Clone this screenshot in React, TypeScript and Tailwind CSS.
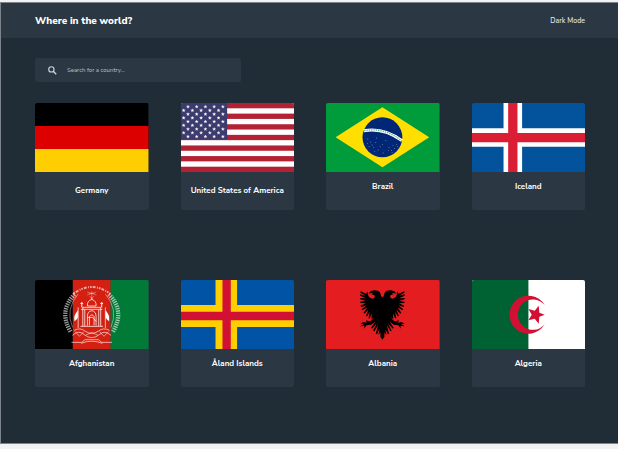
import type { ReactNode } from 'react';

type Country = { name: string; flag: ReactNode; low?: boolean };

function Flag({ children }: { children: ReactNode }) {
  return (
    <svg viewBox="0 0 342 207" preserveAspectRatio="none" aria-hidden="true" className="block h-[69px] w-full">
      {children}
    </svg>
  );
}

const germany = (
  <Flag>
    <rect width="342" height="207" fill="#000" />
    <rect y="69" width="342" height="69" fill="#dd0000" />
    <rect y="138" width="342" height="69" fill="#ffce00" />
  </Flag>
);

const stripes = [0, 2, 4, 6, 8, 10, 12];
const starRows = [0, 1, 2, 3, 4, 5, 6, 7, 8];
const starColumns = [0, 1, 2, 3, 4];

const usa = (
  <Flag>
    <rect width="342" height="207" fill="#fff" />
    {stripes.map((n) => (
      <rect key={n} y={(n * 207) / 13} width="342" height={207 / 13} fill="#b22234" />
    ))}
    <rect width="139" height="110" fill="#3c3b6e" />
    {starRows.map((row) =>
      starColumns.map((col) => (
        <path
          key={`${row}-${col}`}
          transform={`translate(${(row % 2 ? 8 : 21) + col * 26.3} ${11 + row * 11.2})`}
          d="M0-5 1.3-1.6 4.9-1.6 2.1.9 3.1 4.3 0 2.3-3.1 4.3-2.1.9-4.9-1.6-1.3-1.6Z"
          fill="#fff"
          stroke="#fff"
          strokeWidth="0.6"
        />
      )),
    )}
  </Flag>
);

const skyStars = [
  [126, 108], [134, 117], [130, 130], [139, 126], [144, 134], [150, 119], [152, 105], [157, 141],
  [163, 131], [170, 125], [172, 150], [180, 113], [188, 142], [190, 134], [197, 143], [202, 128],
  [206, 137], [212, 125], [216, 131], [199, 149], [147, 145], [125, 121],
];

const brazil = (
  <Flag>
    <rect width="342" height="207" fill="#009c3b" />
    <path d="M29 103 170 13 311 103 170 193Z" fill="#ffdf00" />
    <circle cx="170" cy="103" r="60" fill="#002776" />
    <path d="M114 83Q174 72 229 113" fill="none" stroke="#fff" strokeWidth="9" />
    <path d="M115 83Q174 72 228 113" fill="none" stroke="#5eb583" strokeWidth="4" strokeDasharray="4 3" />
    {skyStars.map(([x, y]) => (
      <circle key={`${x}-${y}`} cx={x} cy={y} r="1.3" fill="#c3cce6" />
    ))}
  </Flag>
);

const iceland = (
  <Flag>
    <rect width="342" height="207" fill="#02529c" />
    <path d="M95 0h56v207H95zM0 76h342v55H0z" fill="#fff" />
    <path d="M109 0h28v207h-28zM0 90h342v28H0z" fill="#dc1e35" />
  </Flag>
);

const afghanistan = (
  <Flag>
    <rect width="114" height="207" fill="#000" />
    <rect x="114" width="114" height="207" fill="#d32011" />
    <rect x="228" width="114" height="207" fill="#007a36" />
    <g fill="none" stroke="#fff">
      <g strokeOpacity="0.6">
        <path d="M120 43Q70 92 107 155" strokeWidth="13" strokeDasharray="4 3" />
        <path d="M222 43Q272 92 235 155" strokeWidth="13" strokeDasharray="4 3" />
        <path d="M130 42Q90 88 113 142M212 42Q252 88 229 142" strokeWidth="2" />
        <path d="M116 41Q171 1 226 41" strokeWidth="6" strokeDasharray="5 3 9 4 3 3" />
      </g>
      <path d="M162 40h18M171 34v22M164 48l7 7 7-7M157 36l28 9M185 36l-28 9" strokeWidth="1.5" strokeOpacity="0.6" />
      <path
        d="M158 78Q156 63 171 58Q186 63 184 78ZM171 58v-6M143 82h56M139 88h64M144 82v56M150 90v48M192 90v48M198 82v56M137 139h68"
        strokeWidth="2.500"
        strokeOpacity="0.9"
      />
      <path d="M158 137v-28Q158 94 171 92Q184 94 184 109v28M164 136v-26Q171 99 178 110v26M158 112h16l10 12" strokeWidth="2.500" strokeOpacity="0.9" />
      <path d="M141 82V67M201 82V67M137 72q4-8 8 0M197 72q4-8 8 0" strokeWidth="3" />
      <path d="M130 82v62M212 82v62" strokeWidth="2" />
      <path d="M129 92q-13 14-10 31q8-5 10-11ZM213 92q13 14 10 31q-8-5-10-11Z" fill="#fff" />
      <g strokeOpacity="0.75">
        <path
          d="M118 151q18-10 34 3q19 12 38 0q16-13 34-3M113 166q19-17 34-3q24 20 48 0q15-14 34 3M110 187h31l10-8h40l10 8h31M139 190q32-13 64 0"
          strokeWidth="2.500"
        />
        <path d="M121 155l13 14 13-14M195 155l13 14 13-14M153 165l18-7 18 7" strokeWidth="2" />
      </g>
    </g>
  </Flag>
);

const aland = (
  <Flag>
    <rect width="342" height="207" fill="#0053a5" />
    <path d="M104 0h65v207h-65zM0 75h342v66H0z" fill="#ffce00" />
    <path d="M125 0h25v207h-25zM0 95h342v26H0z" fill="#d21034" />
  </Flag>
);

const halfEagle =
  'M-1 52 4 49Q5 36 14 32Q26 28 36 34L42 41 34 39 28 41 34 45Q25 43 23 48Q22 54 29 56Q41 55 43 46L44 34 49 41 66 34 66 38 50 47 67 43 67 47 50 55 67 54 67 58 50 63 67 65 66 69 50 70 66 77 64 81 48 76 63 88 60 91 45 82 57 98 54 101 42 89 50 108 46 109 38 95 42 115 38 115 32 100 33 119 27 110Q29 121 39 124L50 121 47 128 57 126 67 131 56 132 67 139 54 137 56 146 48 136 34 134 22 125 34 143 31 146 17 130 28 152 24 154 13 134 20 161 16 162 9 147 12 166 6 157 6 171 -1 179Z';

const albania = (
  <Flag>
    <rect width="342" height="207" fill="#e41e20" />
    <g transform="translate(170 0)">
      <path d={halfEagle} />
      <path d={halfEagle} transform="scale(-1 1)" />
    </g>
  </Flag>
);

const algeria = (
  <Flag>
    <rect width="342" height="207" fill="#fff" />
    <rect width="170" height="207" fill="#006233" />
    <path d="M219 75A57 57 0 1 0 219 133A45.600 45.600 0 1 1 219 75Z" fill="#d21034" />
    <path d="M219 104 203 98 201 77 189 92 170 87 180 104 170 121 189 116 201 131 203 110Z" fill="#d21034" />
  </Flag>
);

const countries: Country[] = [
  { name: 'Germany', flag: germany, low: true },
  { name: 'United States of America', flag: usa, low: true },
  { name: 'Brazil', flag: brazil },
  { name: 'Iceland', flag: iceland },
  { name: 'Afghanistan', flag: afghanistan },
  { name: 'Åland Islands', flag: aland },
  { name: 'Albania', flag: albania },
  { name: 'Algeria', flag: algeria },
];

function CountryCard({ name, flag, low }: Country) {
  return (
    <article className="h-[107px] overflow-hidden rounded-[2px] bg-[#2b3743]">
      {flag}
      <h2 className={`${low ? 'pt-3' : 'pt-2'} text-center text-[8px] leading-[14px] font-bold whitespace-nowrap text-white`}>
        {name}
      </h2>
    </article>
  );
}

export default function App() {
  return (
    <div className="flex min-h-screen flex-col bg-[#f2f2f2] pt-[2px] pb-[5px] font-['Nunito_Sans','Nunito','Lato',sans-serif]">
      <div className="flex-1 border-y border-l border-[#7d838b] bg-[#202d36]">
        <header className="flex h-[35px] items-center justify-between bg-[#2b3743] pr-[33px] pl-[34px] text-white">
          <h1 className="text-[10px] leading-4 font-extrabold">Where in the world?</h1>
          <button type="button" className="text-[7px] leading-4 font-medium text-[#e6e8ea]">
            Dark Mode
          </button>
        </header>
        <main className="pt-5 pr-[33px] pb-14 pl-[34px]">
          <label className="flex h-6 w-[206px] items-center gap-[10px] rounded-[2px] bg-[#2b3743] pl-[13px]">
            <svg viewBox="0 0 24 24" aria-hidden="true" className="size-[9px] shrink-0 text-[#d0d4d8]">
              <circle cx="9" cy="9" r="7" fill="none" stroke="currentColor" strokeWidth="3" />
              <path d="m14.500 14.500 7.500 7.500" stroke="currentColor" strokeWidth="3.500" />
            </svg>
            <input
              type="text"
              aria-label="Search for a country"
              placeholder="Search for a country..."
              className="min-w-0 flex-1 bg-transparent text-[6px] leading-3 text-white outline-none placeholder:text-[#bcc2c8]"
            />
          </label>
          <section aria-label="Countries" className="mt-[21px] grid grid-cols-4 gap-x-8 gap-y-[70px]">
            {countries.map((country) => (
              <CountryCard key={country.name} {...country} />
            ))}
          </section>
        </main>
      </div>
    </div>
  );
}
